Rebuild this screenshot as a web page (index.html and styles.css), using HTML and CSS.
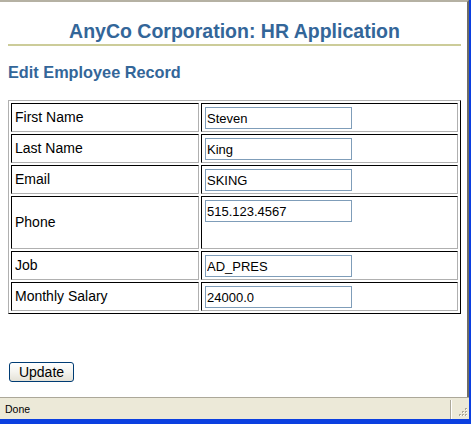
FILE: index.html
```html
<!DOCTYPE html>
<html>
<head>
<meta charset="utf-8">
<title>AnyCo Corporation: HR Application</title>
<link rel="stylesheet" href="styles.css">
</head>
<body>
<div class="window">
  <div class="viewport">
    <h1 class="title">AnyCo Corporation: HR Application</h1>
    <h2 class="subtitle">Edit Employee Record</h2>
    <form class="form">
      <table class="grid">
        <tr>
          <td class="label">First Name</td>
          <td class="value"><input class="field" type="text" value="Steven"></td>
        </tr>
        <tr>
          <td class="label">Last Name</td>
          <td class="value"><input class="field" type="text" value="King"></td>
        </tr>
        <tr>
          <td class="label">Email</td>
          <td class="value"><input class="field" type="text" value="SKING"></td>
        </tr>
        <tr>
          <td class="label">Phone</td>
          <td class="value"><input class="field field-tall" type="text" value="515.123.4567"></td>
        </tr>
        <tr>
          <td class="label">Job</td>
          <td class="value"><input class="field" type="text" value="AD_PRES"></td>
        </tr>
        <tr>
          <td class="label">Monthly Salary</td>
          <td class="value"><input class="field" type="text" value="24000.0"></td>
        </tr>
      </table>
      <div class="actions">
        <button class="btn" type="button">Update</button>
      </div>
    </form>
  </div>
  <div class="statusbar">
    <span class="status-text">Done</span>
    <span class="status-sep"></span>
    <svg class="grip" width="12" height="12" viewBox="0 0 12 12">
      <g fill="#aca899">
        <rect x="9" y="1" width="2" height="2"/>
        <rect x="6" y="4" width="2" height="2"/>
        <rect x="9" y="4" width="2" height="2"/>
        <rect x="3" y="7" width="2" height="2"/>
        <rect x="6" y="7" width="2" height="2"/>
        <rect x="9" y="7" width="2" height="2"/>
      </g>
      <g fill="#ffffff">
        <rect x="10" y="2" width="1" height="1"/>
        <rect x="7" y="5" width="1" height="1"/>
        <rect x="10" y="5" width="1" height="1"/>
        <rect x="4" y="8" width="1" height="1"/>
        <rect x="7" y="8" width="1" height="1"/>
        <rect x="10" y="8" width="1" height="1"/>
      </g>
    </svg>
  </div>
</div>
</body>
</html>
```

FILE: styles.css
```css
html, body {
  margin: 0;
  padding: 0;
  background: #ffffff;
}

body {
  width: 471px;
  height: 424px;
  overflow: hidden;
  font-family: "Liberation Sans", Arial, sans-serif;
}

.window {
  box-sizing: border-box;
  width: 471px;
  height: 424px;
  display: flex;
  flex-direction: column;
  border-right: 2px solid #0b3fe0;
  border-bottom: 5px solid #0b3fe0;
}

.viewport {
  flex: 1;
  min-height: 0;
  background: #ffffff;
  border-top: 2px solid #b5b1a3;
  border-right: 2px solid #6f6d65;
  padding: 0 6px 0 8px;
}

.title {
  margin: 17px 0 0 0;
  padding: 0 0 1px 0;
  font-size: 19.5px;
  line-height: 24px;
  font-weight: bold;
  color: #336699;
  text-align: center;
  border-bottom: 2px solid #cccc99;
}

.subtitle {
  margin: 17px 0 0 0;
  font-size: 16.3px;
  line-height: 18px;
  font-weight: bold;
  color: #336699;
}

.form {
  margin: 19px 0 0 0;
}

.grid {
  border-collapse: separate;
  border-spacing: 2px;
  table-layout: fixed;
  width: 453px;
  border-top: 1px solid #b0b0b0;
  border-left: 1px solid #b0b0b0;
  border-right: 1px solid #000000;
  border-bottom: 1px solid #000000;
}

.grid td {
  border-top: 1px solid #000000;
  border-left: 1px solid #000000;
  border-right: 1px solid #b0b0b0;
  border-bottom: 1px solid #b0b0b0;
  padding: 3px 3px 2px 3px;
}

.grid td.label {
  width: 180px;
  padding: 2px 3px 4px 3px;
  font-size: 14px;
  line-height: 16px;
  color: #000000;
  vertical-align: middle;
}

.value {
  width: 249px;
  vertical-align: top;
}

.field {
  display: block;
  box-sizing: border-box;
  width: 147px;
  height: 22px;
  margin: 0;
  padding: 0 1px;
  border: 1px solid #7f9db9;
  font-family: "Liberation Sans", Arial, sans-serif;
  font-size: 13px;
  color: #000000;
  background: #ffffff;
  outline: none;
}

.field-tall {
  margin-bottom: 24px;
}

.actions {
  margin: 48px 0 0 1px;
}

.btn {
  box-sizing: border-box;
  width: 65px;
  height: 20px;
  padding: 0;
  border: 1px solid #003c74;
  border-radius: 3px;
  background: linear-gradient(#ffffff 0%, #f4f3ee 50%, #e4e1d6 100%);
  font-family: "Liberation Sans", Arial, sans-serif;
  font-size: 14px;
  line-height: 18px;
  color: #000000;
}

.statusbar {
  flex: none;
  height: 21px;
  border-top: 1px solid #aca899;
  background: #ece9d8;
  display: flex;
  align-items: center;
  position: relative;
}

.status-text {
  flex: 1;
  padding-left: 5px;
  font-family: "Liberation Sans", Arial, sans-serif;
  font-size: 10.5px;
  color: #000000;
}

.status-sep {
  align-self: stretch;
  margin-top: 2px;
  width: 1px;
  background: #aca899;
  border-right: 1px solid #ffffff;
  margin-right: 4px;
}

.grip {
  align-self: flex-end;
  margin-right: 1px;
}
```
